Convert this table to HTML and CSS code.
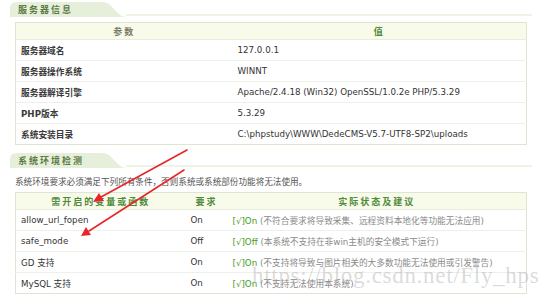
FILE: index.html
```html
<!DOCTYPE html>
<html lang="zh-CN">
<head>
<meta charset="utf-8">
<title>服务器信息</title>
<link rel="stylesheet" href="styles.css">
</head>
<body>
<div class="page">
  <div class="sec-head">
    <div class="tab">
      <svg class="tab-bg" width="116" height="15" viewBox="0 0 116 15" preserveAspectRatio="none"><path d="M0 15 V6 Q0 0 7 0 H92 Q98 0 102 5 L108 11 Q112 15 116 15 Z" fill="#e6efd9"/></svg>
      <span class="tab-text">服务器信息</span>
    </div>
    <div class="sec-line"></div>
  </div>

  <table class="tbl tbl-info">
    <colgroup><col class="c-name"><col></colgroup>
    <thead>
      <tr><th class="th-gray">参数</th><th class="th-green">值</th></tr>
    </thead>
    <tbody>
      <tr><td>服务器域名</td><td>127.0.0.1</td></tr>
      <tr><td>服务器操作系统</td><td>WINNT</td></tr>
      <tr><td>服务器解译引擎</td><td>Apache/2.4.18 (Win32) OpenSSL/1.0.2e PHP/5.3.29</td></tr>
      <tr><td class="b">PHP版本</td><td>5.3.29</td></tr>
      <tr><td>系统安装目录</td><td>C:\phpstudy\WWW\DedeCMS-V5.7-UTF8-SP2\uploads</td></tr>
    </tbody>
  </table>

  <div class="sec-head sec2">
    <div class="tab">
      <svg class="tab-bg" width="116" height="15" viewBox="0 0 116 15" preserveAspectRatio="none"><path d="M0 15 V6 Q0 0 7 0 H92 Q98 0 102 5 L108 11 Q112 15 116 15 Z" fill="#e6efd9"/></svg>
      <span class="tab-text">系统环境检测</span>
    </div>
    <div class="sec-line"></div>
  </div>

  <p class="desc">系统环境要求必须满足下列所有条件，否则系统或系统部份功能将无法使用。</p>

  <table class="tbl tbl-env">
    <colgroup><col class="c-var"><col class="c-req"><col></colgroup>
    <thead>
      <tr><th class="th-green">需开启的变量或函数</th><th class="th-green">要求</th><th class="th-green">实际状态及建议</th></tr>
    </thead>
    <tbody>
      <tr><td>allow_url_fopen</td><td>On</td><td><span class="ok">[√]On</span> <span class="note">(不符合要求将导致采集、远程资料本地化等功能无法应用)</span></td></tr>
      <tr><td>safe_mode</td><td>Off</td><td><span class="ok">[√]Off</span> <span class="note">(本系统不支持在非win主机的安全模式下运行)</span></td></tr>
      <tr><td>GD 支持</td><td>On</td><td><span class="ok">[√]On</span> <span class="note">(不支持将导致与图片相关的大多数功能无法使用或引发警告)</span></td></tr>
      <tr><td>MySQL 支持</td><td>On</td><td><span class="ok">[√]On</span> <span class="note">(不支持无法使用本系统)</span></td></tr>
    </tbody>
  </table>
</div>

<svg class="arrows" width="554" height="297" viewBox="0 0 554 297">
  <g stroke="#e8262a" stroke-width="1.6" fill="#e8262a" stroke-linecap="round">
    <line x1="187" y1="150" x2="101" y2="197"/>
    <polygon points="93,202 99,193 104,201" stroke="none"/>
    <line x1="184" y1="170" x2="89" y2="231"/>
    <polygon points="81,236 86,227 91,235" stroke="none"/>
  </g>
</svg>

<div class="watermark">https://blog.csdn.net/Fly_hps</div>
</body>
</html>
```

FILE: styles.css
```css
* { box-sizing: border-box; }

html, body {
  margin: 0;
  padding: 0;
  background: #ffffff;
}

body {
  width: 554px;
  height: 297px;
  overflow: hidden;
  position: relative;
  font-family: "DejaVu Sans", "Noto Sans CJK SC", sans-serif;
  font-size: 8.7px;
  color: #333333;
}

.page {
  padding: 2px 22px 0 10px;
}

.sec-head {
  display: flex;
  align-items: flex-end;
  height: 15px;
}

.sec2 {
  margin-top: 8px;
}

.tab {
  position: relative;
  width: 116px;
  height: 15px;
  flex: none;
}

.tab-bg {
  position: absolute;
  left: 0;
  top: 0;
}

.tab-text {
  position: relative;
  display: block;
  padding: 2px 0 0 8px;
  font-family: "Noto Sans CJK SC", sans-serif;
  font-weight: bold;
  font-size: 9px;
  line-height: 11px;
  letter-spacing: 2px;
  color: #5d7a45;
}

.sec-line {
  flex: 1;
  height: 2px;
  margin-bottom: 1px;
  background: #eef4e4;
}

.tbl {
  margin-left: 5px;
  width: 512px;
  border-collapse: collapse;
  table-layout: fixed;
  border: 1px solid #dde6d3;
}

.tbl-info {
  margin-top: 5px;
}

.c-name { width: 217px; }
.c-var { width: 170px; }
.c-req { width: 42px; }

.tbl th {
  height: 17px;
  padding: 0;
  background: #f8fbea;
  font-family: "Noto Sans CJK SC", sans-serif;
  font-weight: bold;
  font-size: 9px;
  letter-spacing: 2px;
  text-align: center;
  border-bottom: 1px solid #e6eddd;
}

.th-gray { color: #7a7a6a; }
.th-green { color: #4f8a3a; }

.tbl td {
  height: 21px;
  padding: 0 0 0 5px;
  white-space: nowrap;
  overflow: hidden;
  border-top: 1px solid #eef1ea;
  color: #333333;
}

.tbl-info td:first-child {
  font-weight: bold;
  color: #3a3a3a;
}

.desc {
  margin: 7px 0 3px 5px;
  height: 14px;
  line-height: 14px;
  font-size: 8.6px;
  color: #555555;
}

.ok {
  color: #3f9d24;
}

.note {
  color: #8a8a8a;
}

.arrows {
  position: absolute;
  left: 0;
  top: 0;
  pointer-events: none;
}

.watermark {
  position: absolute;
  left: 252px;
  top: 263px;
  font-family: "Liberation Serif", serif;
  font-size: 23px;
  line-height: 26px;
  letter-spacing: 0.7px;
  color: rgba(160, 160, 160, 0.38);
  white-space: nowrap;
  pointer-events: none;
}
```
